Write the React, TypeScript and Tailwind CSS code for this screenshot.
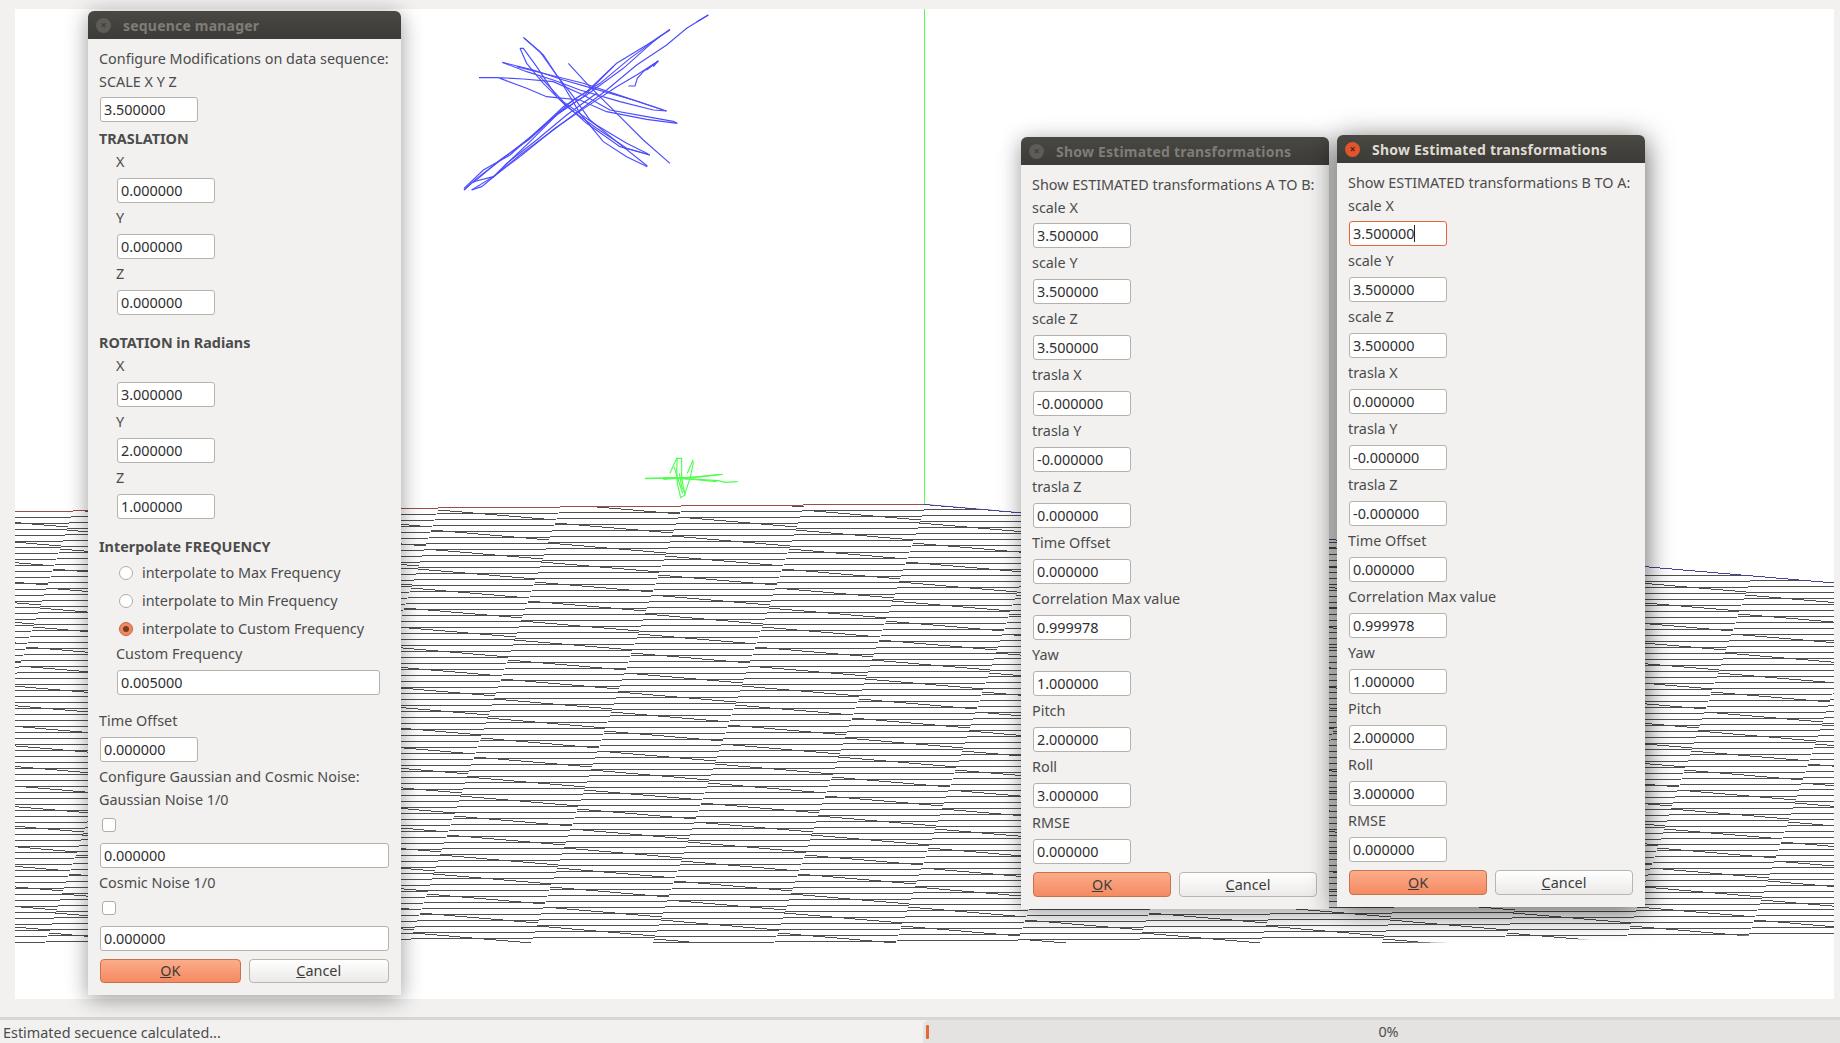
import { useMemo, type ReactNode } from "react";

const FONT = "font-['Noto_Sans','Open_Sans',sans-serif]";

const TOP_EDGE = "15,511 73,510.5 924,504 1834,583 1834,934 1400,943 15,943";

function topBoundary(x: number) {
  return x < 924 ? 511.5 - (x - 15) * 0.0085 : 504 + (x - 924) * 0.0868;
}

// the ground mesh: flat rows every 6px that break every 121.5px, plus a descending run per cell
function buildMesh() {
  const period = 121.5;
  const breakAt = (p: number, y: number) => 73 + period * p - 0.346 * (y - 511);
  let flats = "";
  let runs = "";

  for (let k = 1; k <= 75; k++) {
    for (let p = -2; p <= 16; p++) {
      const y = Math.floor(511 + 6 * k - 0.95 * (p + 1));
      const start = breakAt(p, y);
      const end = breakAt(p + 1, y);
      if (start > 924 && y < topBoundary(start + 0.4 * period)) continue;
      flats += `M${start.toFixed(0)} ${y + 0.5}L${end.toFixed(0)} ${y + 0.5}`;
    }
  }

  for (let p = -1; p <= 16; p++) {
    const offset = (511 + (p - 6) * 13) % 19.5;
    for (let m = 0; m < 24; m++) {
      const endY = 496 + offset + m * 19.5;
      const startY = endY - 9.7;
      const x0 = breakAt(p, startY);
      const x1 = breakAt(p + 1, endY);
      // stepped like the original pixels
      const steps = 9;
      for (let s = 0; s <= steps; s++) {
        const a = x0 + ((x1 - x0) * s) / (steps + 1);
        const b = x0 + ((x1 - x0) * (s + 1)) / (steps + 1);
        const y = Math.round(startY + s + 0.3);
        runs += `M${a.toFixed(0)} ${y + 0.5}L${b.toFixed(0)} ${y + 0.5}`;
      }
    }
  }
  return { flats, runs };
}

// traced at 3x from the plot, x offset 440
const BLUE_TRACE = [
  "72,570 110,535 170,490 280,405 370,320 440,275 530,190 620,135 690,90",
  "95,570 125,560 240,465 340,390 420,330 500,270 590,195 680,135 740,85 805,45",
  "72,570 100,545 160,530 270,425 360,335 440,285 550,205 640,125 665,105",
  "95,570 160,530 240,470 345,385 440,320 530,260 590,225 655,183",
  "72,565 130,510 210,465 300,385 400,300 480,250 570,175 690,88",
  "100,548 180,480 265,420 350,345 430,290 520,200",
  "160,532 200,490 290,420 380,345 470,280",
  "565,258 585,258 592,235 610,215 655,183",
  "640,200 655,183 620,210",
  "770,65 805,45 780,60",
  "250,112 300,155 360,240 420,340 490,425 560,470 622,500",
  "252,114 310,165 350,225 400,290 450,360 530,425 622,498",
  "240,145 250,145 290,200 350,290 440,370 540,440 630,465",
  "240,145 260,190 310,250 380,320 470,385 560,445 630,465",
  "300,230 370,305 460,370 560,430 625,462",
  "385,190 440,250 530,340 610,420 690,490",
  "187,187 280,210 370,240 440,260 580,300 680,333",
  "187,187 260,215 340,240 420,270 540,305 640,330 680,333",
  "230,200 330,225 430,250 550,290 670,330",
  "117,233 175,233 260,265 320,290 420,300 500,335 620,358 712,370 700,364 620,350 510,330 430,285 340,245 250,237 175,233",
];

// traced at 3x from the plot, offset 600,430
const GREEN_TRACE = [
  "135,145 280,142 368,133",
  "135,146 230,144 355,152 375,157 413,155",
  "190,148 300,140 355,134",
  "190,143 280,148 350,155",
  "210,130 230,85 245,85 245,145 255,195 242,203 232,160 230,120 232,85",
  "222,110 235,150 248,190",
  "262,130 278,92 280,100 270,145 255,190 245,170 238,130",
];

function Plot() {
  const { flats, runs } = useMemo(buildMesh, []);
  return (
    <svg className="block w-full h-full" viewBox="15 9 1819 990" shapeRendering="crispEdges">
      <defs>
        <clipPath id="mesh">
          <polygon points={TOP_EDGE} />
        </clipPath>
      </defs>
      <g clipPath="url(#mesh)" fill="none" stroke="#505050" strokeWidth="1">
        <path d={flats} />
        <path d={runs} />
      </g>
      <path
        d="M15 511.5H73M73 510.5H195M195 509.5H316M316 508.5H438M438 507.5H560M560 506.5H681M681 505.5H803M803 504.5H924"
        stroke="#a04a4a"
        fill="none"
      />
      <line x1="924" y1="504.5" x2="1834" y2="583" stroke="#45459c" />
      <line x1="924.5" y1="9" x2="924.5" y2="504" stroke="#4dff4d" />
      <g transform="translate(440 0) scale(0.3333)" fill="none" stroke="#4c4cff" strokeWidth="3.4" shapeRendering="auto">
        {BLUE_TRACE.map((pts) => (
          <polyline key={pts} points={pts} />
        ))}
      </g>
      <g transform="translate(600 430) scale(0.3333)" fill="none" stroke="#4dff4d" strokeWidth="3.4" shapeRendering="auto">
        {GREEN_TRACE.map((pts) => (
          <polyline key={pts} points={pts} />
        ))}
      </g>
    </svg>
  );
}

function Label({ children, className = "" }: { children: ReactNode; className?: string }) {
  return <div className={`h-[17px] leading-[16px] whitespace-nowrap ${className}`}>{children}</div>;
}

function Field({
  value,
  className = "w-[98px]",
  focused = false,
}: {
  value: string;
  className?: string;
  focused?: boolean;
}) {
  return (
    <div
      className={`ml-px h-[25px] leading-[23px] pl-[3px] bg-white rounded-[3px] border text-[#2f2f2f] flex ${
        focused ? "border-[#e2683a]" : "border-[#b6b2ab]"
      } ${className}`}
    >
      {value}
      {focused && <span className="w-px h-[17px] mt-[3px] bg-[#222]" />}
    </div>
  );
}

function Buttons({ className = "" }: { className?: string }) {
  return (
    <div className={`ml-px flex gap-[8px] ${className}`}>
      <button className="flex-1 rounded-[4px] border border-[#c8714f] bg-gradient-to-b from-[#fcac8a] to-[#f48a62] text-[#3c3c3c]">
        <span className="underline">O</span>K
      </button>
      <button className="flex-1 rounded-[4px] border border-[#b9b6af] bg-gradient-to-b from-white to-[#ebeae8] text-[#3c3c3c]">
        <span className="underline">C</span>ancel
      </button>
    </div>
  );
}

function TitleBar({ title, active = false }: { title: string; active?: boolean }) {
  return (
    <div className="h-[28px] rounded-t-[6px] bg-gradient-to-b from-[#4a4843] to-[#3c3b37] flex items-center pl-2 font-bold text-[14px]">
      <span
        className={`w-[15px] h-[15px] rounded-full flex items-center justify-center text-[10px] leading-none ${
          active ? "bg-[#e0552d] text-[#5c1c0a]" : "bg-[#5d5c57] text-[#3f3e3a]"
        }`}
      >
        ×
      </span>
      <span className={`ml-[12px] tracking-[0.2px] ${active ? "text-[#dfdbd2]" : "text-[#7f7d77]"}`}>{title}</span>
    </div>
  );
}

function Radio({ label, checked = false }: { label: string; checked?: boolean }) {
  return (
    <div className="h-[28px] pl-[20px] flex items-center gap-[9px]">
      <span
        className={`w-[14px] h-[14px] rounded-full border flex items-center justify-center ${
          checked ? "border-[#c4623c] bg-[#ee8a62]" : "border-[#b0ada6] bg-white"
        }`}
      >
        {checked && <span className="w-[6px] h-[6px] rounded-full bg-[#7a3a22]" />}
      </span>
      {label}
    </div>
  );
}

function Check({ className = "" }: { className?: string }) {
  return <div className={`ml-[3px] w-[14px] h-[14px] rounded-[3px] border border-[#b0ada6] bg-white ${className}`} />;
}

function Indented({ label, value, first = false }: { label: string; value: string; first?: boolean }) {
  return (
    <div className="pl-[17px]">
      <Label className={first ? "mt-[6px]" : "mt-[7px]"}>{label}</Label>
      <Field value={value} className="w-[98px] mt-[7px]" />
    </div>
  );
}

function SequenceManager() {
  return (
    <div className="absolute left-[88px] top-[11px] w-[313px] z-10 rounded-t-[6px] bg-[#f2f1f0] shadow-[0_4px_22px_rgba(0,0,0,0.4)]">
      <TitleBar title="sequence manager" />
      <div className="px-[11px] pt-[12px] pb-[12px]">
        <Label>Configure Modifications on data sequence:</Label>
        <Label className="mt-[6px]">SCALE X Y Z</Label>
        <Field value="3.500000" className="w-[98px] mt-[6px]" />
        <Label className="mt-[9px] font-bold">TRASLATION</Label>
        <Indented first label="X" value="0.000000" />
        <Indented label="Y" value="0.000000" />
        <Indented label="Z" value="0.000000" />
        <Label className="mt-[20px] font-bold">ROTATION in Radians</Label>
        <Indented first label="X" value="3.000000" />
        <Indented label="Y" value="2.000000" />
        <Indented label="Z" value="1.000000" />
        <Label className="mt-[20px] font-bold">Interpolate FREQUENCY</Label>
        <div className="mt-[3px]">
          <Radio label="interpolate to Max Frequency" />
          <Radio label="interpolate to Min Frequency" />
          <Radio checked label="interpolate to Custom Frequency" />
        </div>
        <div className="pl-[17px]">
          <Label className="mt-[3px]">Custom Frequency</Label>
          <Field value="0.005000" className="w-[263px] mt-[7px]" />
        </div>
        <Label className="mt-[18px]">Time Offset</Label>
        <Field value="0.000000" className="w-[98px] mt-[7px]" />
        <Label className="mt-[7px]">Configure Gaussian and Cosmic Noise:</Label>
        <Label className="mt-[6px]">Gaussian Noise 1/0</Label>
        <Check className="mt-[9px]" />
        <Field value="0.000000" className="w-[289px] mt-[11px]" />
        <Label className="mt-[7px]">Cosmic Noise 1/0</Label>
        <Check className="mt-[9px]" />
        <Field value="0.000000" className="w-[289px] mt-[11px]" />
        <Buttons className="w-[289px] h-[24px] mt-[8px]" />
      </div>
    </div>
  );
}

const ESTIMATES_AB = [
  ["scale X", "3.500000"],
  ["scale Y", "3.500000"],
  ["scale Z", "3.500000"],
  ["trasla X", "-0.000000"],
  ["trasla Y", "-0.000000"],
  ["trasla Z", "0.000000"],
  ["Time Offset", "0.000000"],
  ["Correlation Max value", "0.999978"],
  ["Yaw", "1.000000"],
  ["Pitch", "2.000000"],
  ["Roll", "3.000000"],
  ["RMSE", "0.000000"],
];

const ESTIMATES_BA = ESTIMATES_AB.map(([label, value]) => {
  if (label === "trasla X") return [label, "0.000000"];
  if (label === "trasla Z") return [label, "-0.000000"];
  return [label, value];
});

function EstimateDialog({
  heading,
  rows,
  active = false,
  className,
}: {
  heading: string;
  rows: string[][];
  active?: boolean;
  className: string;
}) {
  return (
    <div className={`absolute w-[308px] rounded-t-[6px] bg-[#f2f1f0] ${className}`}>
      <TitleBar title="Show Estimated transformations" active={active} />
      <div className="px-[11px] pt-[12px] pb-[12px]">
        <Label>{heading}</Label>
        {rows.map(([label, value], i) => (
          <div key={label}>
            <Label className={i === 0 ? "mt-[6px]" : "mt-[7px]"}>{label}</Label>
            <Field value={value} focused={active && i === 0} className={i === 0 ? "w-[98px] mt-[6px]" : "w-[98px] mt-[7px]"} />
          </div>
        ))}
        <Buttons className="w-[284px] h-[25px] mt-[8px]" />
      </div>
    </div>
  );
}

export default function App() {
  return (
    <div className={`relative w-[1840px] h-[1043px] overflow-hidden bg-[#f2f1f0] text-[#4c4c4c] text-[14.4px] ${FONT}`}>
      <div className="pt-[9px] pl-[15px] pr-[6px] h-[1017px]">
        <div className="h-[990px] bg-white">
          <Plot />
        </div>
      </div>
      <div className="h-[26px] border-t-[3px] border-[#d8d6d2] flex">
        <div className="w-[923px] pl-[3px] leading-[25px]">Estimated secuence calculated...</div>
        <div className="flex-1 flex items-center bg-[#e4e3e1] rounded-tl-[6px] pl-[3px]">
          <span className="w-[3px] h-[14px] rounded-[1px] bg-[#e2683a]" />
          <span className="flex-1 text-center pl-[8px] pt-px">0%</span>
        </div>
      </div>
      <SequenceManager />
      <EstimateDialog
        heading="Show ESTIMATED transformations A TO B:"
        rows={ESTIMATES_AB}
        className="left-[1021px] top-[137px] z-10 shadow-[0_4px_22px_rgba(0,0,0,0.4)]"
      />
      <EstimateDialog
        active
        heading="Show ESTIMATED transformations B TO A:"
        rows={ESTIMATES_BA}
        className="left-[1337px] top-[135px] z-20 shadow-[0_5px_28px_rgba(0,0,0,0.65)]"
      />
    </div>
  );
}
